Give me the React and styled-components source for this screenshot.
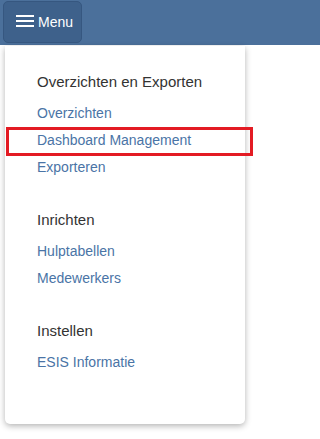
import React from "react";
import styled, { createGlobalStyle } from "styled-components";

// ========== css: global ==========
const GlobalStyle = createGlobalStyle`
  html, body {
    margin: 0;
    padding: 0;
    background: #ffffff;
    font-family: "Liberation Sans", Arial, Helvetica, sans-serif;
  }
`;

// ========== css: styled components ==========
const Page = styled.div`
  position: relative;
  width: 100%;
  height: 439px;
  overflow: hidden;
`;

// __________ top bar __________
const TopBar = styled.div`
  height: 45px;
  background-color: #4b709b;
  display: flex;
  align-items: flex-start;
  padding: 1px 0 0 3px;
  box-sizing: border-box;
`;

const MenuButton = styled.button`
  width: 79px;
  height: 42px;
  display: flex;
  align-items: center;
  gap: 4px;
  padding: 0 0 0 12px;
  box-sizing: border-box;
  background-color: #3e618b;
  border: 1px solid #365780;
  border-radius: 5px;
  color: #ffffff;
  font-family: inherit;
  font-size: 14px;
  cursor: pointer;
`;

const Burger = styled.svg`
  width: 18px;
  height: 14px;
  display: block;
`;

// __________ dropdown panel __________
const Panel = styled.div`
  margin: 1px 0 0 5px;
  width: 240px;
  height: 378px;
  box-sizing: border-box;
  padding: 26px 0 0 32px;
  background-color: #ffffff;
  border-radius: 0 0 5px 5px;
  box-shadow: 0 2px 6px rgba(0, 0, 0, 0.3);
`;

const Section = styled.div`
  margin-bottom: 29px;
`;

const Heading = styled.div`
  font-size: 15px;
  line-height: 20px;
  color: #333333;
  margin-bottom: 8px;
`;

const Link = styled.a`
  display: block;
  font-size: 14px;
  line-height: 27px;
  color: #4a74a6;
  text-decoration: none;
`;

// __________ annotation overlay __________
const Highlight = styled.div`
  position: absolute;
  left: 6px;
  top: 127px;
  width: 247px;
  height: 29px;
  box-sizing: border-box;
  border: 3px solid #e31b23;
  pointer-events: none;
`;

const sections = [
  {
    title: "Overzichten en Exporten",
    links: ["Overzichten", "Dashboard Management", "Exporteren"],
  },
  { title: "Inrichten", links: ["Hulptabellen", "Medewerkers"] },
  { title: "Instellen", links: ["ESIS Informatie"] },
];

// ========== component ==========
const App = () => {
  return (
    <Page>
      <GlobalStyle />
      <TopBar>
        <MenuButton>
          <Burger viewBox="0 0 18 14">
            <rect x="0" y="0" width="18" height="2" fill="#ffffff" />
            <rect x="0" y="5" width="18" height="2" fill="#ffffff" />
            <rect x="0" y="10" width="18" height="2" fill="#ffffff" />
          </Burger>
          Menu
        </MenuButton>
      </TopBar>

      <Panel>
        {sections.map((s) => (
          <Section key={s.title}>
            <Heading>{s.title}</Heading>
            {s.links.map((l) => (
              <Link key={l} href="#">
                {l}
              </Link>
            ))}
          </Section>
        ))}
      </Panel>

      <Highlight />
    </Page>
  );
};

export default App;
